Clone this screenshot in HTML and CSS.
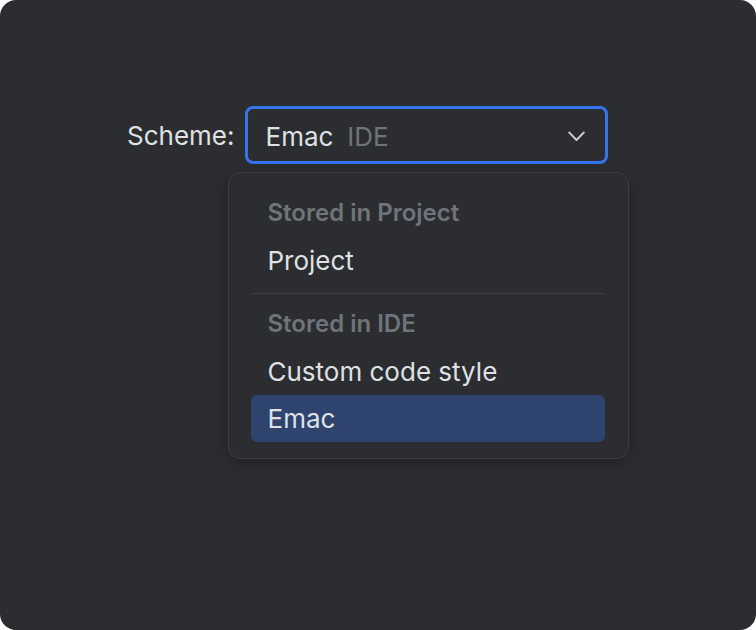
FILE: index.html
```html
<!DOCTYPE html>
<html lang="en">
<head>
<meta charset="utf-8">
<title>Scheme</title>
<link rel="stylesheet" href="styles.css">
</head>
<body>
<div class="panel">
  <div class="field">
    <span class="label">Scheme:</span>
    <div class="anchor">
      <div class="combo">
        <span class="value">Emac</span>
        <span class="hint">IDE</span>
        <svg class="chevron" width="17" height="11" viewBox="0 0 17 11"><path d="M1.2 1.5 L8.5 9 L15.8 1.5" fill="none" stroke="#ced0d6" stroke-width="1.8" stroke-linecap="round" stroke-linejoin="round"/></svg>
      </div>
      <div class="popup">
        <div class="group">Stored in Project</div>
        <div class="item">Project</div>
        <div class="sep"></div>
        <div class="group">Stored in IDE</div>
        <div class="item">Custom code style</div>
        <div class="item selected">Emac</div>
      </div>
    </div>
  </div>
</div>
</body>
</html>
```
FILE: styles.css
```css
html, body {
  margin: 0;
  padding: 0;
  background: #ffffff;
}
body {
  font-family: Inter, "Noto Sans", sans-serif;
  width: 756px;
  height: 630px;
}
.panel {
  width: 756px;
  height: 630px;
  box-sizing: border-box;
  background: #2b2d30;
  border-radius: 16px;
  padding: 106px 0 0 127px;
}
.field {
  display: flex;
  align-items: flex-start;
  gap: 10px;
}
.label {
  color: #dfe1e5;
  font-size: 26px;
  line-height: 58px;
  padding-top: 1px;
}
.anchor {
  position: relative;
}
.combo {
  width: 363px;
  height: 58px;
  box-sizing: border-box;
  border: 3px solid #3574f0;
  border-radius: 8px;
  display: flex;
  align-items: center;
  padding: 2px 20px 0 18px;
  font-size: 26px;
}
.value { color: #dfe1e5; }
.hint { color: #6f737a; margin-left: 14px; }
.chevron { margin-left: auto; }
.popup {
  position: absolute;
  left: -17px;
  top: 66px;
  width: 401px;
  box-sizing: border-box;
  background: #2b2d30;
  border: 1px solid #3c3e43;
  border-radius: 12px;
  padding: 15px 23px 16px 22px;
  box-shadow: 0 4px 16px rgba(0,0,0,0.25);
}
.group, .item {
  height: 48px;
  display: flex;
  align-items: center;
  padding-left: 17px;
  font-size: 26px;
  border-radius: 6px;
}
.group {
  color: #6f737a;
  font-weight: 600;
  font-size: 24px;
}
.item { color: #dfe1e5; }
.selected { background: #2e436e; height: 47px; }
.sep {
  height: 1px;
  background: #3c3e43;
  margin: 9px 0 5px;
}
```
